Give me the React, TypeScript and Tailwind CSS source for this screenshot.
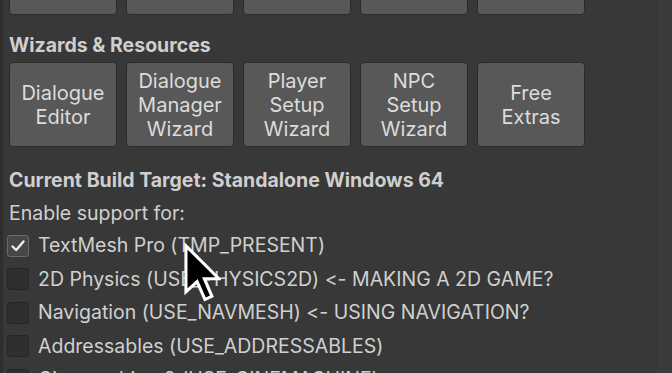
import React from "react";

const topRow = ["", "", "", "", ""];
const wizards = [
  ["Dialogue", "Editor"],
  ["Dialogue", "Manager", "Wizard"],
  ["Player", "Setup", "Wizard"],
  ["NPC", "Setup", "Wizard"],
  ["Free", "Extras"],
];
const options = [
  { label: "TextMesh Pro (TMP_PRESENT)", checked: true },
  { label: "2D Physics (USE_PHYSICS2D) <- MAKING A 2D GAME?", checked: false },
  { label: "Navigation (USE_NAVMESH) <- USING NAVIGATION?", checked: false },
  { label: "Addressables (USE_ADDRESSABLES)", checked: false },
  { label: "Cinemachine 2 (USE_CINEMACHINE)", checked: false },
];

const EditorButton = ({ lines }: { lines: string[] }) => (
  <div className="w-[108px] h-[85px] flex flex-col items-center justify-center rounded-[4px] border border-[#2c2c2c] bg-[#585858] text-[#dcdcdc] text-[20px] leading-[24px]">
    {lines.map((l) => (
      <span key={l}>{l}</span>
    ))}
  </div>
);

const Checkbox = ({ checked }: { checked: boolean }) =>
  checked ? (
    <div className="w-[22px] h-[22px] shrink-0 rounded-[3px] border border-[#6a6a6a] bg-[#474747] flex items-center justify-center">
      <svg width="16" height="16" viewBox="0 0 16 16">
        <path d="M2.5 8.5 L6.2 12 L13.5 3.5" fill="none" stroke="#f0f0f0" strokeWidth="2.4" strokeLinecap="round" strokeLinejoin="round" />
      </svg>
    </div>
  ) : (
    <div className="w-[22px] h-[22px] shrink-0 rounded-[3px] border border-[#262626] bg-[#2f2f2f]" />
  );

export default function App() {
  return (
    <div className="relative h-[373px] w-[672px] overflow-hidden bg-[#383838] font-['Inter',sans-serif] text-[#d0d0d0] [font-feature-settings:'calt'_0,'liga'_0]">
      <div className="absolute left-0 top-0 h-full w-[3px] bg-[#2e2e2e]" />
      <div className="absolute right-0 top-0 h-full w-[14px] bg-[#3b3b3b]" />

      {/* top row cut off */}
      <div className="mt-[-70px] flex gap-[9px] pl-[9px]">
        {topRow.map((_, i) => (
          <EditorButton key={i} lines={[]} />
        ))}
      </div>

      <div className="mt-[18px] pl-[9px] h-[24px] leading-[24px] text-[19.5px] font-bold text-[#cfcfcf]">
        Wizards &amp; Resources
      </div>

      <div className="mt-[5px] flex gap-[9px] pl-[9px]">
        {wizards.map((w) => (
          <EditorButton key={w.join(" ")} lines={w} />
        ))}
      </div>

      <div className="mt-[21px] pl-[9px] h-[24px] leading-[24px] text-[19.5px] font-bold text-[#cfcfcf]">
        Current Build Target: Standalone Windows 64
      </div>
      <div className="mt-[9px] pl-[9px] h-[24px] leading-[24px] text-[19.5px]">
        Enable support for:
      </div>

      <div className="mt-[4px] flex flex-col">
        {options.map((o) => (
          <div key={o.label} className="h-[33.5px] flex items-center gap-[9px] pl-[7px] text-[19.5px] whitespace-nowrap">
            <Checkbox checked={o.checked} />
            <span>{o.label}</span>
          </div>
        ))}
      </div>

      {/* mouse cursor */}
      <svg className="absolute left-[183px] top-[243px]" width="38" height="60" viewBox="0 0 13.5 21.5">
        <path
          d="M1 1 L1 17.5 L5 13.8 L7.8 20.2 L10.3 19.1 L7.6 12.8 L12.8 12.8 Z"
          fill="#000"
          stroke="#fff"
          strokeWidth="1.1"
          strokeLinejoin="miter"
        />
      </svg>
    </div>
  );
}
